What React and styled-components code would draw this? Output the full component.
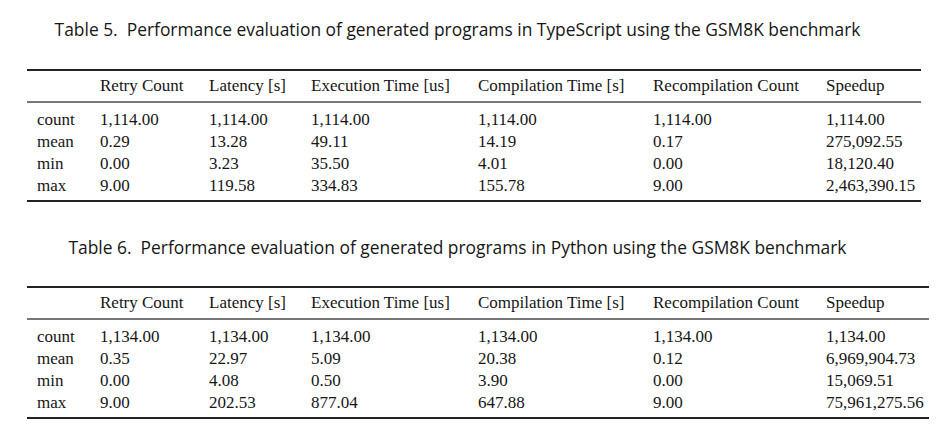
import React from 'react';
import styled, { createGlobalStyle } from 'styled-components';

const GlobalStyle = createGlobalStyle`
  html, body {
    margin: 0;
    padding: 0;
    background: #ffffff;
  }
`;

const Page = styled.div`
  width: 950px;
  height: 447px;
  padding-left: 27px;
  box-sizing: border-box;
  color: #161616;
  overflow: hidden;
`;

const Figure = styled.section`
  padding-top: ${props => props.top}px;
`;

const Caption = styled.div`
  width: 861px;
  text-align: center;
  font-family: "Open Sans", "DejaVu Sans", sans-serif;
  font-size: 17.4px;
  line-height: 24px;
  white-space: pre;
  margin-bottom: ${props => props.gap}px;
`;

const Table = styled.table`
  border-collapse: separate;
  border-spacing: 0;
  table-layout: fixed;
  width: ${props => props.width}px;
  border-top: 2px solid #222;
  border-bottom: 2px solid #222;
  font-family: "Liberation Serif", "Times New Roman", serif;
  font-size: 17px;
`;

const HeadCell = styled.th`
  height: 30px;
  padding: 0 0 0 ${props => (props.first ? 10 : 11)}px;
  font-weight: normal;
  text-align: left;
  vertical-align: middle;
  white-space: nowrap;
  border-bottom: 2px solid #777;
`;

const BodyRow = styled.tr`
  & > td {
    line-height: 22px;
    padding-top: 0;
    padding-bottom: 0;
  }
  &:first-child > td {
    padding-top: 6px;
  }
  &:last-child > td {
    padding-bottom: 3px;
  }
`;

const Cell = styled.td`
  padding-left: ${props => (props.first ? 10 : 11)}px;
  padding-right: 0;
  white-space: nowrap;
`;

const headers = [
  '',
  'Retry Count',
  'Latency [s]',
  'Execution Time [us]',
  'Compilation Time [s]',
  'Recompilation Count',
  'Speedup',
];

const tables = [
  {
    caption: 'Table 5.  Performance evaluation of generated programs in TypeScript using the GSM8K benchmark',
    top: 17,
    gap: 28,
    cols: [62, 109, 102, 167, 175, 173, 106],
    rows: [
      ['count', '1,114.00', '1,114.00', '1,114.00', '1,114.00', '1,114.00', '1,114.00'],
      ['mean', '0.29', '13.28', '49.11', '14.19', '0.17', '275,092.55'],
      ['min', '0.00', '3.23', '35.50', '4.01', '0.00', '18,120.40'],
      ['max', '9.00', '119.58', '334.83', '155.78', '9.00', '2,463,390.15'],
    ],
  },
  {
    caption: 'Table 6.  Performance evaluation of generated programs in Python using the GSM8K benchmark',
    top: 33,
    gap: 27,
    cols: [62, 109, 102, 167, 175, 173, 114],
    rows: [
      ['count', '1,134.00', '1,134.00', '1,134.00', '1,134.00', '1,134.00', '1,134.00'],
      ['mean', '0.35', '22.97', '5.09', '20.38', '0.12', '6,969,904.73'],
      ['min', '0.00', '4.08', '0.50', '3.90', '0.00', '15,069.51'],
      ['max', '9.00', '202.53', '877.04', '647.88', '9.00', '75,961,275.56'],
    ],
  },
];

function StatsTable({ data }) {
  const width = data.cols.reduce((a, b) => a + b, 0);
  return (
    <Figure top={data.top}>
      <Caption gap={data.gap}>{data.caption}</Caption>
      <Table width={width}>
        <colgroup>
          {data.cols.map((w, i) => (
            <col key={i} style={{ width: w }} />
          ))}
        </colgroup>
        <thead>
          <tr>
            {headers.map((h, i) => (
              <HeadCell key={i} first={i === 0}>{h}</HeadCell>
            ))}
          </tr>
        </thead>
        <tbody>
          {data.rows.map(row => (
            <BodyRow key={row[0]}>
              {row.map((v, i) => (
                <Cell key={i} first={i === 0}>{v}</Cell>
              ))}
            </BodyRow>
          ))}
        </tbody>
      </Table>
    </Figure>
  );
}

export default function App() {
  return (
    <>
      <GlobalStyle />
      <Page>
        {tables.map(t => (
          <StatsTable key={t.caption} data={t} />
        ))}
      </Page>
    </>
  );
}
